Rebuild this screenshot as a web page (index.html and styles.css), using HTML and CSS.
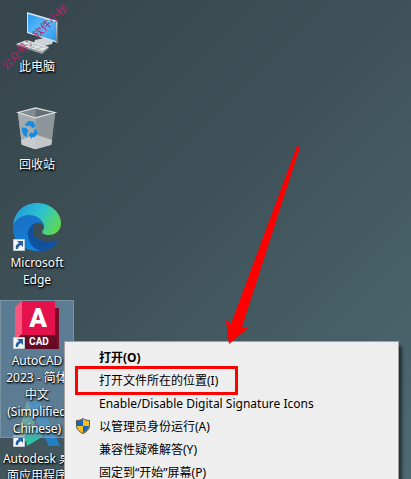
FILE: index.html
```html
<!DOCTYPE html>
<html lang="zh-CN">
<head>
<meta charset="utf-8">
<title>桌面</title>
<link rel="stylesheet" href="styles.css">
</head>
<body>
<main class="desktop">
  <nav class="icons" aria-label="桌面图标">
    <a class="tile" href="#">
      <svg class="icon" viewBox="0 0 48 48" aria-hidden="true">
        <defs><linearGradient id="scr" x1="0" y1="0" x2="1" y2="1"><stop offset="0" stop-color="#2a9af0"/><stop offset=".5" stop-color="#5dbcfa"/><stop offset="1" stop-color="#2796ee"/></linearGradient></defs>
        <g transform="translate(0 3)">
        <path d="M22 30l9-2 9 3-1 3-8 2-10-3z" fill="#cdd3d7"/>
        <path d="M14 2l31 9v22l-31-10z" fill="#d8e2e8"/>
        <path d="M15 4l28 8v19L15 22z" fill="url(#scr)"/>
        <path d="M44 11h1v22l-2-1z" fill="#6f7a80"/>
        <path d="M3 34l11-4 22 7-7 5z" fill="#e3e6e8"/>
        <path d="M3 34l26 8 7-5v1l-7 6-26-9z" fill="#929b9f"/>
        <path d="M7 33l24 8M11 31l22 7M10 37l9-5M16 39l8-5M22 41l8-5" stroke="#a7afb3" stroke-width=".7" fill="none"/>
        </g>
      </svg>
      <span class="label">此电脑</span>
    </a>
    <a class="tile" href="#">
      <svg class="icon" viewBox="0 0 48 48" aria-hidden="true">
        <g transform="translate(0 2) scale(.98 .92)">
        <path d="M5 6l18-5 20 5-4 35-16 5-14-5z" fill="#aab0b3"/>
        <path d="M5 6l18 6v34L9 41z" fill="#a4abaf"/>
        <path d="M23 12l20-6-4 35-16 5z" fill="#8d969b"/>
        <path d="M7 6l16-4 18 4-18 5z" fill="#647076"/>
        <path d="M23 2v9L7 6z" fill="#828c91"/>
        <path d="M8 36l15-6 17 6-1 5-16 5-14-5z" fill="#d5d7d8" opacity=".75"/>
        <path d="M5 6l18-5 20 5-20 6z" fill="none" stroke="#dfe2e3" stroke-width="1.2"/>
        <g fill="#168bdf"><path d="M12 19l4-4 5 1 2 5-3 2-3-3-3 1z"/><path d="M9 22l5 1 2 4-2 1 1 5-4-2-2-5z"/><path d="M16 30l3-3v2l3-2-1-3 3 1 1 4-3 4-3 0v2z"/></g>
        </g>
      </svg>
      <span class="label">回收站</span>
    </a>
    <a class="tile" href="#">
      <svg class="icon" viewBox="0 0 48 48" aria-hidden="true">
        <defs>
          <linearGradient id="e1" x1="0" y1=".3" x2="1" y2=".7"><stop offset="0" stop-color="#239bdc"/><stop offset=".5" stop-color="#2cc3d2"/><stop offset="1" stop-color="#62d84b"/></linearGradient>
          <linearGradient id="e2" x1="0" y1="0" x2=".5" y2="1"><stop offset="0" stop-color="#1b6cc0"/><stop offset="1" stop-color="#1184dc"/></linearGradient>
        </defs>
        <path d="M0 23C1 9 11 0 24 0c14 0 24 10 24 20 0 8-6 12-12 12-5 0-7-2-7-3s2-2 2-5c0-5-5-11-13-11C9 13 2 17 0 23z" fill="url(#e1)"/>
        <path d="M0 24c2-8 9-12 16-12 8 0 14 5 14 10-2-2-4-3-7-2-5 2-7 8-5 14 2 7 7 12 13 13C15 51-1 41 0 24z" fill="url(#e2)"/>
        <path d="M22 20c-5 2-8 7-7 13 1 9 8 15 16 15 6-1 11-5 14-10 1-1 0-2-1-1-10 5-24 0-24-10 0-3 1-5 2-7z" fill="#11529f"/>
      </svg>
      <svg class="shortcut" viewBox="0 0 12 12" aria-hidden="true"><path d="M.5.500h11v11H.5z" fill="#f5f7f9" stroke="#c2cbd2"/><path d="M4 2h6v6L8 6C6 7 5 8 5 10H3C2 7 4 5 6 4z" fill="#27609f"/></svg>
      <span class="label">Microsoft Edge</span>
    </a>
    <a class="tile selected" href="#">
      <svg class="icon" viewBox="0 0 48 48" aria-hidden="true">
        <path d="M42 7h4v41H12l-10-9V8z" fill="#790c2b"/>
        <path d="M2 6l7-6v33l-7 6z" fill="#fa567d"/>
        <path d="M9 0h33v34H9z" fill="#e5114d"/>
        <path d="M2 40l7-6h33l4 14H2z" fill="#650b25"/>
        <text x="25" y="26" class="cad-a">A</text><text x="26" y="44" class="cad-word">CAD</text>
      </svg>
      <svg class="shortcut" viewBox="0 0 12 12" aria-hidden="true"><path d="M.5.500h11v11H.5z" fill="#f5f7f9" stroke="#c2cbd2"/><path d="M4 2h6v6L8 6C6 7 5 8 5 10H3C2 7 4 5 6 4z" fill="#27609f"/></svg>
      <span class="label">AutoCAD<br>2023 - 简体<br>中文<br>(Simplified<br>Chinese)</span>
    </a>
    <a class="tile" href="#">
      <svg class="icon" viewBox="0 0 48 48" aria-hidden="true">
        <path d="M14 2h13L17 40 2 47z" fill="#6cb37d"/>
        <path d="M12 36l20-11-3 13-15 9z" fill="#2dc3a2"/>
        <path d="M14 2h13l20 45H36z" fill="#2180c3"/>
      </svg>
      <svg class="shortcut" viewBox="0 0 12 12" aria-hidden="true"><path d="M.5.500h11v11H.5z" fill="#f5f7f9" stroke="#c2cbd2"/><path d="M4 2h6v6L8 6C6 7 5 8 5 10H3C2 7 4 5 6 4z" fill="#27609f"/></svg>
      <span class="label">Autodesk 桌<br>面应用程序</span>
    </a>
  </nav>
  <div class="watermark">公众号：软件小秘</div>
  <div class="menu" role="menu">
    <button class="item default" role="menuitem">打开(O)</button>
    <button class="item marked" role="menuitem">打开文件所在的位置(I)</button>
    <button class="item" role="menuitem">Enable/Disable Digital Signature Icons</button>
    <button class="item" role="menuitem">
      <svg class="shield" viewBox="0 0 16 16" aria-hidden="true"><path d="M8 .5c2 1.500 4 2 6.500 2v5c0 4-3 6.500-6.500 8-3.500-1.500-6.500-4-6.500-8v-5C4 2.500 6 2 8 .5z" fill="#f9bd20"/><path d="M8 1v7H2V3c2 0 4-.6 6-2zM8 8h6c-.4 3.500-3 5.500-6 7z" fill="#1669bd"/><path d="M8 .5c2 1.500 4 2 6.500 2v5c0 4-3 6.500-6.500 8-3.500-1.500-6.500-4-6.500-8v-5C4 2.500 6 2 8 .5z" fill="none" stroke="#4c5357"/></svg>以管理员身份运行(A)</button>
    <button class="item" role="menuitem">兼容性疑难解答(Y)</button>
    <button class="item" role="menuitem">固定到“开始”屏幕(P)</button>
  </div>
  <svg class="arrow" viewBox="0 0 74 200" aria-hidden="true"><path d="M71 1l3 1-58 180 6 1L3 199 0 175l5 4z" fill="#f00"/></svg>
</main>
</body>
</html>
```
FILE: styles.css
```css
*, *::after { box-sizing: border-box; }
body {
  margin: 0;
  font: 12px/17px "Noto Sans", "Noto Sans CJK SC", sans-serif;
}
.desktop {
  position: relative;
  height: 100vh;
  overflow: hidden;
  background: linear-gradient(135deg, #36454c 0%, #3f5158 45%, #4d6a73 100%);
}
.icons {
  display: grid;
  grid-auto-rows: 98px;
  width: 74px;
  padding-top: 6px;
}
.tile {
  position: relative;
  display: flex;
  flex-direction: column;
  align-items: center;
  gap: 3px;
  height: max-content;
  color: #fff;
  text-align: center;
  text-decoration: none;
  border: 1px solid transparent;
}
.selected {
  z-index: 1;
  border-color: #7893a4;
  background: rgba(112, 154, 187, 0.6);
}
.icon { width: 48px; height: 48px; flex: none; }
.shortcut { position: absolute; left: 12px; top: 36px; width: 12px; height: 12px; }
.label { text-shadow: 1px 1px 2px #000, 0 1px 2px #000; }
.cad-a { font: 900 26px Roboto, sans-serif; fill: #fff; text-anchor: middle; }
.cad-word { font: bold 10px Roboto, sans-serif; fill: #fff; text-anchor: middle; }
.watermark {
  position: absolute;
  left: -10px;
  top: 28px;
  color: #b02464;
  font-size: 11px;
  white-space: nowrap;
  transform: rotate(-45deg);
}
.menu {
  position: absolute;
  z-index: 2;
  left: 64px;
  right: 12px;
  top: 341px;
  display: flex;
  flex-direction: column;
  padding: 4px 2px;
  background: #eee;
  border: 1px solid #a5a0a0;
  box-shadow: 3px 5px 3px rgba(0, 0, 0, 0.55);
}
.item {
  position: relative;
  height: 23px;
  padding: 0 0 0 32px;
  border: 0;
  background: none;
  color: #000;
  font: inherit;
  text-align: left;
}
.default { font-weight: bold; }
.marked::after {
  content: "";
  position: absolute;
  left: 8px;
  top: -3px;
  width: 163px;
  height: 29px;
  border: 3px solid #f00;
}
.shield { position: absolute; left: 8px; top: 3px; width: 16px; height: 16px; }
.arrow {
  position: absolute;
  z-index: 3;
  left: 226px;
  top: 145px;
  width: 74px;
  height: 200px;
}
```
